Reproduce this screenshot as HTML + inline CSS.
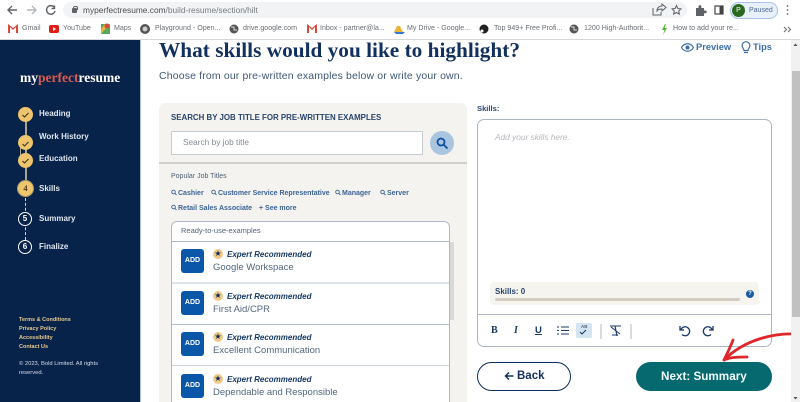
<!DOCTYPE html>
<html><head><meta charset="utf-8">
<style>
html,body{margin:0;padding:0;width:800px;height:402px;overflow:hidden;background:#fff;font-family:"Liberation Sans",sans-serif}
#w{position:relative;width:800px;height:402px;overflow:hidden;background:#fff}
.a,.t{position:absolute}
.t{white-space:nowrap;line-height:1}
.bm{font-size:7.1px;color:#6a6e73;top:24.5px}
.st{font-size:8px;font-weight:bold;color:#dfe6f0}
.c{position:absolute;left:18px;width:15px;height:15px;border-radius:50%;background:#eec56c;text-align:center}
.n{position:absolute;width:12px;height:12px;border:1.5px solid #fff;border-radius:50%;left:18px;color:#fff;font-size:8px;font-weight:bold;text-align:center;line-height:12px;background:#08234a}
.ft{font-size:5.5px;font-weight:bold;color:#e7c98c;left:19px}
.lk{font-size:7px;font-weight:bold;color:#3c6496;top:190px}
.row{position:absolute;left:172px;width:277px;border-bottom:1px solid #b6bfcc;height:41px}
.add{position:absolute;left:9px;top:7px;width:23px;height:24px;background:#0a56a8;border-radius:3px;color:#fff;font-size:7px;font-weight:bold;text-align:center;line-height:24px}
.star{position:absolute;left:41px;top:7px;width:10px;height:10px;border-radius:50%;background:#eec98a;color:#0b2a55;font-size:8px;line-height:10px;text-align:center}
.er{position:absolute;left:55px;top:9px;font-size:8px;font-weight:bold;font-style:italic;color:#173a66;white-space:nowrap;line-height:1}
.sk{position:absolute;left:41px;top:21px;font-size:9.5px;color:#52677f;white-space:nowrap;line-height:1}
</style></head><body><div id="w">

<!-- browser toolbar -->
<div class="a" style="left:0;top:0;width:800px;height:39px;background:#fff"></div>
<div class="a" style="left:0;top:39px;width:800px;height:1px;background:#d6d8db"></div>
<svg class="a" style="left:0;top:0" width="60" height="20" fill="none" stroke-width="1.4">
<path d="M17 10H8M12 6l-4 4 4 4" stroke="#5f6368"/>
<path d="M27 10h9M32 6l4 4-4 4" stroke="#b4b7ba"/>
<path d="M54 7a4.3 4.3 0 1 0 1 4M54.5 5.5v3h-3" stroke="#5f6368"/>
</svg>
<div class="a" style="left:63px;top:2px;width:624px;height:16px;border-radius:8px;background:#f1f3f4"></div>
<div class="a" style="left:72px;top:8px;width:5px;height:5px;background:#5f6368;border-radius:1px"></div>
<div class="a" style="left:73px;top:6px;width:3px;height:3px;border:1px solid #5f6368;border-bottom:0;border-radius:2px 2px 0 0"></div>
<div class="t" style="left:83px;top:5.5px;font-size:8.35px;color:#4a4d51">myperfectresume.com<span style="color:#777b80">/build-resume/section/hilt</span></div>
<svg class="a" style="left:650px;top:0" width="150" height="20" fill="none" stroke="#5f6368" stroke-width="1">
<path d="M3 8v7h8v-3M7 11c0-3 2-5 5-5V4l4 3.500-4 3.500V9c-2 0-4 .5-5 2z"/>
<path d="M26.500 5.500l1.400 3 3.100.4-2.300 2.100.7 3.100-2.900-1.600-2.900 1.600.7-3.100-2.300-2.100 3.100-.4z"/>
<path d="M46 8h2.500V6.500a1.400 1.400 0 0 1 2.800 0V8H54v2.500h1.300a1.400 1.400 0 0 1 0 2.800H54V16h-8z" fill="#5f6368" stroke="none"/>
<rect x="65" y="6" width="8" height="8" stroke-width="1.200" stroke="#444"/><rect x="69.500" y="6" width="3.500" height="8" fill="#444" stroke="none"/>
<circle cx="137.500" cy="6" r=".9" fill="#5f6368" stroke="none"/><circle cx="137.500" cy="10" r=".9" fill="#5f6368" stroke="none"/><circle cx="137.500" cy="14" r=".9" fill="#5f6368" stroke="none"/>
</svg>
<div class="a" style="left:730px;top:2px;width:46px;height:15px;border:1px solid #a9c4e8;border-radius:9px;background:#e8f0fb"></div>
<div class="a" style="left:732px;top:4px;width:13px;height:13px;border-radius:50%;background:#2a6a1e;color:#fff;font-size:7px;text-align:center;line-height:13px">P</div>
<div class="t" style="left:749px;top:6.500px;font-size:7px;color:#4c6c9a">Paused</div>

<!-- bookmarks -->
<svg class="a" style="left:0;top:20px" width="800" height="19">
<path d="M8 4v9h2V7l3 3 3-3v6h2V4l-5 4z" fill="#d8483c"/>
<rect x="49" y="5" width="10" height="8" rx="2" fill="#e01f14"/><path d="M53 7l3 2-3 2z" fill="#fff"/>
<rect x="101" y="4" width="9" height="10" fill="#57a85c"/><path d="M101 14l9-10h-5l-4 5z" fill="#e5b33b"/><circle cx="107" cy="6" r="2.500" fill="#d8483c"/>
<circle cx="145" cy="9" r="5" fill="#555"/><circle cx="145" cy="9" r="2.500" fill="#ccc"/>
<circle cx="234" cy="9" r="4.500" fill="#555"/><path d="M231 7h3v3h3" stroke="#ddd" fill="none"/>
<path d="M307 4v9h2V7l3 3 3-3v6h2V4l-5 4z" fill="#d8483c"/>
<path d="M394 12l3-6h3l3 6z" fill="#e8b735"/><path d="M394 12l2 2h7l2-2z" fill="#3a78d8"/>
<circle cx="484" cy="9" r="4.500" fill="#222"/><circle cx="482" cy="11" r="1.500" fill="#fff"/>
<circle cx="574" cy="9" r="4.500" fill="#555"/><path d="M571 7h3v3h3" stroke="#ddd" fill="none"/>
<path d="M665 4l-3 6h2.500l-1.500 5 4-7h-2.500l1.500-4z" fill="#4cb830"/>
<path d="M784 7l2.500 2.500-2.500 2.500M788 7l2.500 2.500-2.500 2.500" stroke="#666" fill="none"/>
</svg>
<div class="t bm" style="left:22px">Gmail</div>
<div class="t bm" style="left:63px">YouTube</div>
<div class="t bm" style="left:114px">Maps</div>
<div class="t bm" style="left:155px">Playground - Open...</div>
<div class="t bm" style="left:243px">drive.google.com</div>
<div class="t bm" style="left:320px">Inbox - partner@la...</div>
<div class="t bm" style="left:407px">My Drive - Google...</div>
<div class="t bm" style="left:494px">Top 949+ Free Profi...</div>
<div class="t bm" style="left:584px">1200 High-Authorit...</div>
<div class="t bm" style="left:673px">How to add your re...</div>

<!-- sidebar -->
<div class="a" style="left:0;top:40px;width:140px;height:362px;background:#08234a"></div>
<div class="a" style="left:140px;top:40px;width:1px;height:362px;background:#b5c2d3"></div>
<div class="t" style="left:20px;top:70.500px;font-family:'Liberation Serif',serif;font-weight:bold;font-size:13.500px;color:#fff">my<span style="color:#dc5a50">perfect</span>resume</div>

<div class="a" style="left:25px;top:112px;width:1.500px;height:70px;background:#a9a58e"></div>
<div class="a" style="left:20px;top:140px;width:1px;height:20px;background:#a9a58e"></div>
<div class="a" style="left:25px;top:198px;width:0;height:42px;border-left:1.500px dashed #cfd6e0"></div>
<div class="c" style="top:107px"></div>
<div class="c" style="top:135px"></div>
<div class="c" style="top:153px"></div>
<svg class="a" style="left:18px;top:107px" width="15" height="62" fill="none" stroke="#3a3222" stroke-width="1.100">
<path d="M4.500 8l2 2 4-4M4.500 37l2 2 4-4M4.500 54l2 2 4-4"/>
</svg>
<div class="a" style="left:17px;top:180px;width:15px;height:15px;border-radius:50%;background:#eec56c;border:1.500px solid #a99a70;color:#4b3c18;font:bold 8.500px/15px 'Liberation Serif',serif;text-align:center">4</div>
<div class="n" style="top:212px">5</div>
<div class="n" style="top:240px">6</div>
<div class="t st" style="left:39px;top:110px">Heading</div>
<div class="t st" style="left:39px;top:133px">Work History</div>
<div class="t st" style="left:39px;top:155px">Education</div>
<div class="t st" style="left:39px;top:185px">Skills</div>
<div class="t st" style="left:39px;top:215px">Summary</div>
<div class="t st" style="left:39px;top:243px">Finalize</div>

<div class="t ft" style="top:317.500px">Terms &amp; Conditions</div>
<div class="t ft" style="top:326.500px">Privacy Policy</div>
<div class="t ft" style="top:335.500px">Accessibility</div>
<div class="t ft" style="top:344.500px">Contact Us</div>
<div class="t" style="left:19px;top:360px;font-size:5.800px;line-height:9px;color:#d6dde8">© 2023, Bold Limited. All rights<br>reserved.</div>

<!-- heading -->
<div class="t" style="left:159px;top:40px;font-family:'Liberation Serif',serif;font-weight:bold;font-size:21.300px;color:#12305e">What skills would you like to highlight?</div>
<div class="t" style="left:159px;top:71px;font-size:10.500px;color:#3e5876;letter-spacing:.15px">Choose from our pre-written examples below or write your own.</div>
<svg class="a" style="left:680px;top:40px" width="72" height="14" fill="none" stroke="#3d6fa5" stroke-width="1.200">
<path d="M1.500 7.500c3-5 9-5 12 0-3 5-9 5-12 0z"/><circle cx="7.500" cy="7.500" r="2" fill="#3d6fa5" stroke="none"/>
<path d="M64 12.500h4M64 10.500c0-1.800-1.800-2.300-1.800-5a3.800 3.800 0 0 1 7.600 0c0 2.700-1.800 3.200-1.800 5z"/>
</svg>
<div class="t" style="left:696px;top:43px;font-size:9.300px;font-weight:bold;color:#3d6fa5">Preview</div>
<div class="t" style="left:753px;top:43px;font-size:9.300px;font-weight:bold;color:#3d6fa5">Tips</div>

<!-- left panel -->
<div class="a" style="left:159px;top:103px;width:308px;height:299px;background:#f4f3ef;border-radius:6px 6px 0 0"></div>
<div class="a" style="left:159px;top:162px;width:308px;height:2px;background:#cfd1cf"></div>
<div class="t" style="left:171px;top:114px;font-size:7.900px;font-weight:bold;color:#28456e">SEARCH BY JOB TITLE FOR PRE-WRITTEN EXAMPLES</div>
<div class="a" style="left:171px;top:131px;width:250px;height:22px;background:#fff;border:1px solid #c6ccd4"></div>
<div class="t" style="left:183px;top:138px;font-size:8.300px;color:#828b98">Search by job title</div>
<div class="a" style="left:430px;top:131px;width:24px;height:24px;border-radius:50%;background:#aac5e0"></div>
<svg class="a" style="left:430px;top:131px" width="24" height="24" fill="none" stroke="#0b4f9c" stroke-width="1.800"><circle cx="11" cy="11" r="3.500"/><path d="M13.500 13.500l4 4"/></svg>
<div class="t" style="left:171px;top:173px;font-size:7px;color:#4d5f76">Popular Job Titles</div>
<svg class="a" style="left:171px;top:189px" width="190" height="24" fill="none" stroke="#3c6496" stroke-width=".9">
<circle cx="2.500" cy="3" r="1.800"/><path d="M4 4.500l1.500 1.500"/>
<circle cx="42.500" cy="3" r="1.800"/><path d="M44 4.500l1.500 1.500"/>
<circle cx="166.500" cy="3" r="1.800"/><path d="M168 4.500l1.500 1.500"/>
<circle cx="2.500" cy="18" r="1.800"/><path d="M4 19.500l1.500 1.500"/>
</svg>
<svg class="a" style="left:380px;top:189px" width="10" height="8" fill="none" stroke="#3c6496" stroke-width=".9"><circle cx="2.500" cy="3" r="1.800"/><path d="M4 4.500l1.500 1.500"/></svg>
<div class="t lk" style="left:178px">Cashier</div>
<div class="t lk" style="left:218px">Customer Service Representative</div>
<div class="t lk" style="left:342px">Manager</div>
<div class="t lk" style="left:387px">Server</div>
<div class="t lk" style="left:178px;top:204.500px">Retail Sales Associate</div>
<div class="t lk" style="left:259px;top:204.500px">+ See more</div>

<!-- list -->
<div class="a" style="left:171px;top:221px;width:277px;height:190px;background:#fff;border:1px solid #aeb7c4;border-radius:6px 6px 0 0"></div>
<div class="t" style="left:181px;top:227px;font-size:7.500px;color:#52647c">Ready-to-use-examples</div>
<div class="a" style="left:171px;top:241px;width:279px;height:1px;background:#aeb7c4"></div>
<div class="row" style="top:242px;height:40px;border-bottom:2px solid #dfe4ea"><div class="add">ADD</div><div class="star">★</div><div class="er">Expert Recommended</div><div class="sk">Google Workspace</div></div>
<div class="row" style="top:284px;height:40px"><div class="add">ADD</div><div class="star">★</div><div class="er">Expert Recommended</div><div class="sk">First Aid/CPR</div></div>
<div class="row" style="top:325px;height:40px;border-bottom-color:#cfd5de"><div class="add">ADD</div><div class="star">★</div><div class="er">Expert Recommended</div><div class="sk">Excellent Communication</div></div>
<div class="row" style="top:367px;height:34px;border:0"><div class="add">ADD</div><div class="star">★</div><div class="er">Expert Recommended</div><div class="sk">Dependable and Responsible</div></div>
<div class="a" style="left:450px;top:242px;width:4px;height:78px;background:#d8d8d6"></div>

<!-- right -->
<div class="t" style="left:477px;top:104.500px;font-size:7.600px;font-weight:bold;color:#28456e">Skills:</div>
<div class="a" style="left:477px;top:119px;width:293px;height:226px;border:1px solid #aeb5c2;border-radius:7px;background:#fff"></div>
<div class="t" style="left:495px;top:133px;font-size:8.300px;font-style:italic;color:#b5b8bc">Add your skills here.</div>
<div class="a" style="left:490px;top:282px;width:269px;height:23px;background:#f5f4ef;border-radius:4px"></div>
<div class="t" style="left:495px;top:288px;font-size:8px;font-weight:bold;color:#28456e">Skills: 0</div>
<div class="a" style="left:495px;top:298px;width:245px;height:3px;background:#d3cdc1;border-radius:2px"></div>
<div class="a" style="left:746px;top:290px;width:8px;height:8px;border-radius:50%;background:#1a5aa5;color:#fff;font-size:6px;font-weight:bold;text-align:center;line-height:8px">?</div>
<div class="a" style="left:478px;top:314px;width:293px;height:1px;background:#aeb5c2"></div>
<div class="t" style="left:491px;top:325px;font:bold 10px 'Liberation Serif',serif;color:#173a66">B</div>
<div class="t" style="left:514px;top:325px;font:italic bold 10px 'Liberation Serif',serif;color:#173a66">I</div>
<div class="t" style="left:535px;top:325px;font:bold 9.500px 'Liberation Sans',sans-serif;color:#173a66;text-decoration:underline">U</div>
<div class="a" style="left:576px;top:323px;width:16px;height:15px;background:#d3e5f1;border-radius:2px"></div>
<div class="t" style="left:581px;top:325px;font-size:4.500px;font-weight:bold;color:#51657f">AB</div>
<svg class="a" style="left:550px;top:320px" width="190" height="24" fill="none" stroke="#173a66" stroke-width="1.100">
<path d="M11 7h8M11 10.500h8M11 14h8M7 7h2M7 10.500h2M7 14h2"/>
<path d="M30 12l2 2 4-4" />
<path d="M51 4v15M81 4v15" stroke="#b6bec9"/>
<path d="M60 6h11M65 6l2 10M62 15h6M61 7l9 7"/>
<path d="M130 6v4h4M131 9.500a4.500 4.500 0 1 1 1 5" stroke-width="1.300"/>
<path d="M163 6v4h-4M162 9.500a4.500 4.500 0 1 0-1 5" stroke-width="1.300"/>
</svg>
<div class="a" style="left:477px;top:362px;width:92px;height:27px;border:1.500px solid #0d2d5c;border-radius:15px;background:#fff"></div>
<svg class="a" style="left:504px;top:370px" width="11" height="12" fill="none" stroke="#12305e" stroke-width="1.500"><path d="M9.500 6H1.500M5 2.500L1.500 6 5 9.500"/></svg>
<div class="t" style="left:517px;top:371px;font-size:11.500px;font-weight:bold;color:#12305e">Back</div>
<div class="a" style="left:636px;top:362px;width:136px;height:29px;border-radius:15px;background:#05696f"></div>
<div class="t" style="left:661px;top:371px;font-size:11.700px;font-weight:bold;color:#f2fafa">Next: Summary</div>

<!-- arrow -->
<svg class="a" style="left:715px;top:325px" width="85" height="40" fill="none" stroke="#e0262c" stroke-width="2.800" stroke-linecap="round" stroke-linejoin="round">
<path d="M81 9C60 8 30 14 9 35"/><path d="M18 15C15 23 12 29 9 35C16 32 23 32 32 32"/>
</svg>

<!-- scrollbar -->
<div class="a" style="left:791px;top:40px;width:9px;height:362px;background:#f1f1f1"></div>
<div class="a" style="left:791.500px;top:71px;width:8px;height:246px;background:#c1c1c1"></div>
<svg class="a" style="left:791px;top:40px" width="9" height="362" fill="#505050"><path d="M2.500 6L4.500 3.500 6.500 6z"/><path d="M2.500 357L4.500 359.500 6.500 357z"/></svg>
</div></body></html>
